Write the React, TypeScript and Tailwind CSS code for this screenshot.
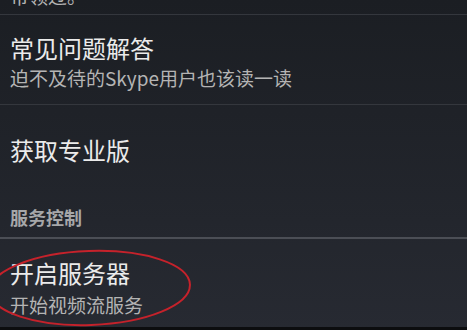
const cjk = { fontFamily: '"Noto Sans CJK SC", "Noto Sans", sans-serif' };

const Title = ({ children }: { children: React.ReactNode }) => (
  <div className="text-[24px] leading-[30px] text-[#ebebeb]">{children}</div>
);

const Sub = ({ children }: { children: React.ReactNode }) => (
  <div className="text-[19px] leading-[24px] text-[#b4b4b4]">{children}</div>
);

export default function App() {
  return (
    <div
      className="relative w-[467px] h-[330px] overflow-hidden bg-gradient-to-b from-[#1b1e23] to-[#272a32]"
      style={cjk}
    >
      {/* tail of the previous item, scrolled mostly out of view */}
      <div className="h-[14px] overflow-hidden px-[10px]">
        <div className="text-[19px] leading-[24px] text-[#b4b4b4] -mt-[16px]">带领过。</div>
      </div>
      <div className="h-px bg-[#34373d]" />

      <div className="h-[89px] px-[10px] pt-[18px]">
        <Title>常见问题解答</Title>
        <div className="mt-[3px]">
          <Sub>迫不及待的Skype用户也该读一读</Sub>
        </div>
      </div>
      <div className="h-px bg-[#34373d]" />

      <div className="h-[89px] px-[10px] flex items-center">
        <Title>获取专业版</Title>
      </div>

      <div className="h-[43px] px-[10px] flex items-center">
        <div className="text-[18px] leading-[24px] font-bold text-[#a6a7a9] mt-[2px]">服务控制</div>
      </div>
      <div className="h-[2px] bg-[#4b4e55]" />

      <div className="h-[88px] px-[10px] pt-[19px]">
        <Title>开启服务器</Title>
        <div className="mt-[5px]">
          <Sub>开始视频流服务</Sub>
        </div>
      </div>
      <div className="h-[3px] bg-[#0c0d0f]" />

      <svg className="absolute left-0 top-0 pointer-events-none" width="467" height="330">
        <ellipse
          cx="90"
          cy="288"
          rx="100"
          ry="37"
          transform="rotate(-2 90 288)"
          fill="none"
          stroke="#c5222b"
          strokeWidth="2"
        />
      </svg>
    </div>
  );
}
